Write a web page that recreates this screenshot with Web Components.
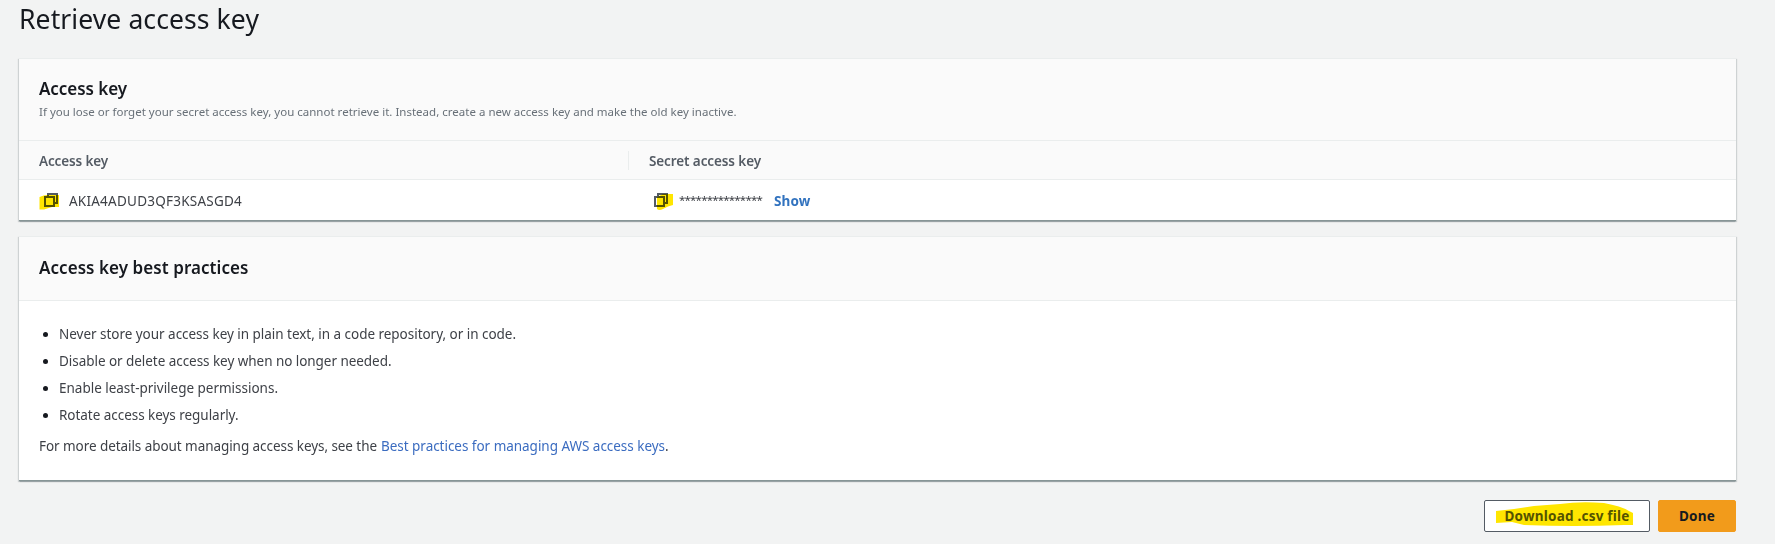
<!DOCTYPE html>
<html lang="en">
<head>
<meta charset="utf-8">
<title>Retrieve access key</title>
<style>
html,body{margin:0;height:100%;background:#f2f3f3;overflow:hidden}
body{font-family:"Noto Sans","Open Sans",sans-serif;font-size:13.5px;line-height:22px;color:#3e4147}
</style>
</head>
<body>
<key-page></key-page>
<script>
const define = (name, html, setup) => {
  const t = document.createElement('template');
  t.innerHTML = html;
  customElements.define(name, class extends HTMLElement {
    connectedCallback() {
      if (this.shadowRoot) return;
      this.attachShadow({mode: 'open'}).append(t.content.cloneNode(true));
      if (setup) setup(this);
    }
  });
};

// Single-line text tracked so that it fills the width in its "w" attribute.
define('fit-text', `<style>:host{display:inline-block;white-space:nowrap}span{display:inline-block;white-space:nowrap}</style><span><slot></slot></span>`, el => {
  const span = el.shadowRoot.querySelector('span');
  const w = +el.getAttribute('w');
  requestAnimationFrame(() => {
    const natural = span.getBoundingClientRect().width;
    span.style.letterSpacing = ((w - natural) / el.textContent.length) + 'px';
    el.style.width = w + 'px';
  });
});

define('copy-icon', `<style>:host{display:block;position:relative;width:20px;height:18px}svg{display:block;overflow:visible}
.mark{position:absolute;left:0;top:0;mix-blend-mode:multiply}</style>
<svg width="20" height="18" fill="none" stroke="#545b64" stroke-width="2"><path d="M6 6h9v9H6zM9 6V3h9v9h-3"/></svg>
<svg class="mark" width="20" height="18"><path fill="#ffe600"/></svg>`, el => {
  el.shadowRoot.querySelector('.mark path').setAttribute('d', el.getAttribute('mark'));
});

define('panel-card', `<style>:host{display:block;background:#fff;border-top:1px solid #eaeded;box-shadow:0 1px 0 0 rgba(0,28,36,.12),1px 1px 1px 0 rgba(0,28,36,.15),-1px 1px 1px 0 rgba(0,28,36,.15);border-bottom:1px solid #879596;box-sizing:border-box}
header{background:#fafafa;border-bottom:1px solid #eaeded;box-sizing:border-box;padding:var(--top) 20px 0;height:var(--head)}</style>
<header><slot name="header"></slot></header><slot></slot>`);

define('key-table', `<style>:host{display:block}
.row{display:grid;grid-template-columns:610px 1fr;align-items:center}
.head{background:#fafafa;border-bottom:1px solid #eaeded;height:39px;box-sizing:border-box;color:#545b64;font-weight:600}
.head>div{padding-left:20px;height:19px;line-height:20px}.head>div:first-child{border-right:1px solid #eaeded}
.body{height:40px}.cell{display:flex;align-items:center;padding-left:20px}
.id{padding-top:1px}.show{padding-top:1px}
.id{margin-left:10px}.stars{margin-left:10px;font-size:11.5px}.show{margin-left:12px;color:#3273bf;font-weight:700}</style>
<div class="row head"><div><fit-text w="69">Access key</fit-text></div><div><fit-text w="112">Secret access key</fit-text></div></div>
<div class="row body"><div class="cell"><copy-icon mark="M.5 6Q5 4 8 4H20V16H13L5 18.500H.5z"></copy-icon><fit-text class="id" w="173">AKIA4ADUD3QF3KSASGD4</fit-text></div>
<div class="cell"><copy-icon mark="M8 6L14 3H24V14Q19 15 14 18Q10 20 8 18z"></copy-icon><fit-text class="stars" w="83">***************</fit-text><fit-text class="show" w="36.5">Show</fit-text></div></div>`);

define('practice-list', `<style>:host{display:block;padding:19px 20px 0}ul{margin:0;padding:0;list-style:none}
li{display:flex;align-items:center;height:27px}li::before{content:"";width:5px;height:5px;border-radius:50%;background:#16191f;margin:1px 11px 0 4px}
p{margin:7px 0 0}a{color:#3b6cc0}</style>
<ul><li><fit-text w="457">Never store your access key in plain text, in a code repository, or in code.</fit-text></li>
<li><fit-text w="332.500">Disable or delete access key when no longer needed.</fit-text></li>
<li><fit-text w="219">Enable least-privilege permissions.</fit-text></li>
<li><fit-text w="179.500">Rotate access keys regularly.</fit-text></li></ul>
<p><fit-text w="338">For more details about managing access keys, see the</fit-text><fit-text w="4">&nbsp;</fit-text><a><fit-text w="284">Best practices for managing AWS access keys</fit-text></a>.</p>`);

define('action-button', `<style>:host{display:flex;align-items:center;justify-content:center;position:relative;box-sizing:border-box;height:32px;width:78px;border:1px solid #f29b1b;border-radius:2px;background:#f29b1b;color:#16191f;font-weight:700}
:host([outline]){width:166px;background:#fff;border-color:#545b64;color:#545b64}
svg{display:none;position:absolute;left:-1px;top:-1px;mix-blend-mode:multiply}:host([outline]) svg{display:block}</style>
<slot></slot><svg width="166" height="32"><path fill="#ffe600" d="M12 11L30 9L50 6L76 4Q96 1 120 3Q137 6 145 11L149 13V25H140Q90 27 40 25L28 22L12 23z"/></svg>`);

define('key-page', `<style>:host{display:block;padding:1px 39px 0 19px}
h1{margin:0;font-size:26.5px;font-weight:400;line-height:36px;height:57px;color:#16191f}
h2{margin:0;font-size:17px;font-weight:600;line-height:22px;color:#16191f}
small{display:block;font-size:11.5px;line-height:18px;margin-top:3px;color:#687078}
.one{--head:82px;--top:19px;height:163px}.two{--head:64px;--top:20px;height:245px;margin-top:15px}
footer{display:flex;justify-content:flex-end;gap:8px;margin-top:19px}</style>
<h1><fit-text w="240">Retrieve access key</fit-text></h1>
<panel-card class="one"><div slot="header"><h2><fit-text w="88">Access key</fit-text></h2><small><fit-text w="697.5">If you lose or forget your secret access key, you cannot retrieve it. Instead, create a new access key and make the old key inactive.</fit-text></small></div><key-table></key-table></panel-card>
<panel-card class="two"><h2 slot="header"><fit-text w="209.5">Access key best practices</fit-text></h2><practice-list></practice-list></panel-card>
<footer><action-button outline><fit-text w="125">Download .csv file</fit-text></action-button><action-button><fit-text w="36">Done</fit-text></action-button></footer>`);
</script>
</body>
</html>
